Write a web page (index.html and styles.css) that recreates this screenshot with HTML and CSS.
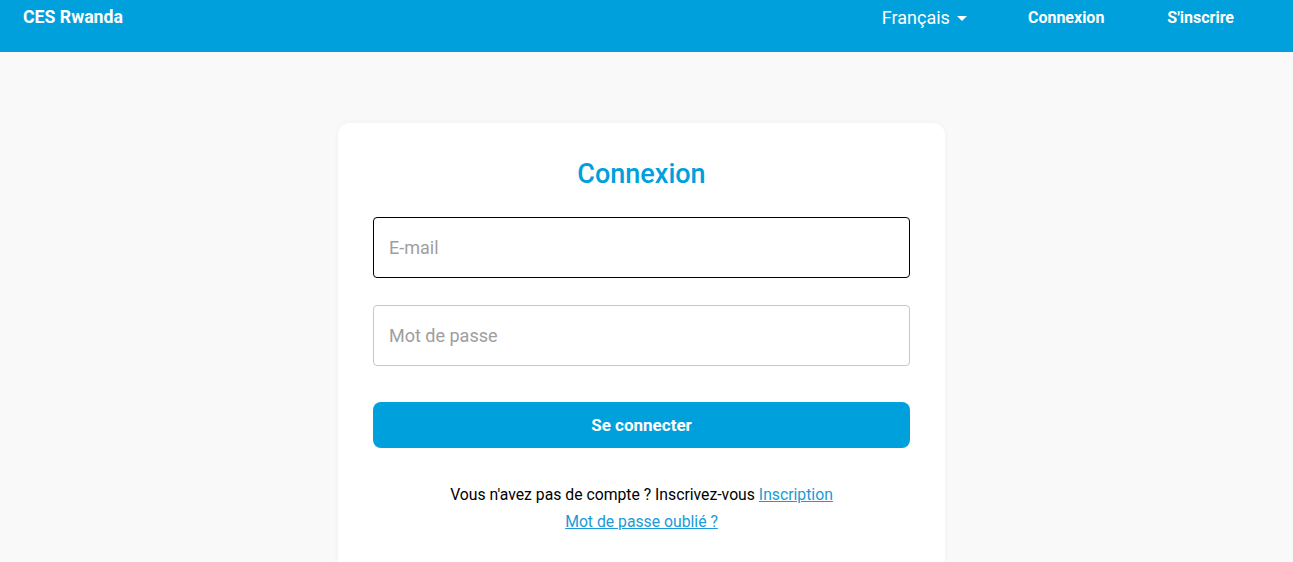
FILE: index.html
```html
<!DOCTYPE html>
<html lang="fr">
<head>
<meta charset="utf-8">
<title>CES Rwanda - Connexion</title>
<link rel="stylesheet" href="styles.css">
</head>
<body>
<header class="topbar">
  <div class="brand">CES Rwanda</div>
  <nav class="nav">
    <div class="lang">Français
      <svg class="caret" width="10" height="5" viewBox="0 0 10 5"><path d="M0 0h10L5 5z" fill="#fff"/></svg>
    </div>
    <a class="nav-link nav-login" href="#">Connexion</a>
    <a class="nav-link nav-signup" href="#">S'inscrire</a>
  </nav>
</header>
<main class="main">
  <section class="card">
    <h1 class="title">Connexion</h1>
    <form class="form">
      <input class="field field-focus" type="email" placeholder="E-mail">
      <input class="field" type="password" placeholder="Mot de passe">
      <button class="submit" type="button">Se connecter</button>
    </form>
    <p class="signup-line">Vous n'avez pas de compte ? Inscrivez-vous <a class="link" href="#">Inscription</a></p>
    <p class="forgot-line"><a class="link" href="#">Mot de passe oublié ?</a></p>
  </section>
</main>
</body>
</html>
```

FILE: styles.css
```css
* { box-sizing: border-box; }
html, body { margin: 0; padding: 0; }
body {
  font-family: Roboto, "Liberation Sans", sans-serif;
  background: #f9f9f9;
  color: #000;
  height: 562px;
  overflow: hidden;
}
.topbar {
  height: 52px;
  background: #00a0dc;
  display: flex;
  align-items: flex-start;
  justify-content: space-between;
  color: #fff;
}
.brand {
  font-size: 17.7px;
  font-weight: 700;
  padding: 7px 0 0 23px;
  line-height: 20px;
}
.nav {
  display: flex;
  align-items: flex-start;
  padding-right: 59px;
}
.lang {
  font-size: 18px;
  line-height: 22px;
  padding-top: 7px;
  display: flex;
  align-items: center;
  gap: 7px;
  margin-right: 61px;
}
.caret { margin-top: 1px; }
.nav-link {
  color: #fff;
  text-decoration: none;
  font-size: 16px;
  font-weight: 700;
  line-height: 18px;
  padding-top: 9px;
}
.nav-login { margin-right: 63px; }
.main {
  display: flex;
  justify-content: center;
  padding-top: 71px;
  padding-right: 10px;
}
.card {
  width: 607px;
  background: #fff;
  border-radius: 12px;
  box-shadow: 0 0 6px rgba(0,0,0,0.04);
  padding: 35px 35px 40px;
}
.title {
  margin: 0 0 27px;
  text-align: center;
  font-size: 27px;
  font-weight: 500;
  color: #00a0dc;
  line-height: 32px;
}
.form {
  display: flex;
  flex-direction: column;
}
.field {
  height: 61px;
  border: 1px solid #c8c8c8;
  border-radius: 4px;
  padding: 0 15px;
  font-family: Roboto, "Liberation Sans", sans-serif;
  font-size: 18px;
  color: #333;
  background: #fff;
  outline: none;
  margin-bottom: 27px;
}
.field::placeholder { color: #9e9e9e; }
.field-focus { border-color: #000; }
.form .field:nth-child(2) { margin-bottom: 36px; }
.submit {
  height: 46px;
  border: none;
  border-radius: 8px;
  background: #00a0dc;
  color: #fff;
  font-family: Roboto, "Liberation Sans", sans-serif;
  font-size: 17px;
  font-weight: 700;
}
.signup-line {
  margin: 38px 0 0;
  text-align: center;
  font-size: 15.75px;
  line-height: 18px;
}
.forgot-line {
  margin: 9px 0 0;
  text-align: center;
  font-size: 15.75px;
  line-height: 18px;
}
.link {
  color: #1a9ad6;
  text-decoration: underline;
}
```
